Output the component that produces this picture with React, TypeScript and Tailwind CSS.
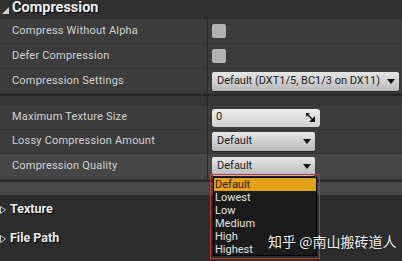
import React from "react";

const font = { fontFamily: "Roboto, 'Liberation Sans', sans-serif" };

function Combo({ text, w }: { text: string; w: string }) {
  return (
    <div
      className={`${w} h-[19px] rounded-[2px] bg-gradient-to-b from-[#e6e6e6] to-[#b9b9b9] flex items-center justify-between pl-[5px] pr-[4px] text-[11px] text-[#1c1c1c] shadow-[0_1px_0_#222]`}
    >
      <span>{text}</span>
      <svg width="8" height="5" viewBox="0 0 8 5">
        <polygon points="0,0 8,0 4,5" fill="#111" />
      </svg>
    </div>
  );
}

function Check() {
  return <div className="w-[14px] h-[14px] rounded-[2px] bg-[#b3b3b3]" />;
}

function Row({
  label,
  children,
  h,
  hl,
}: {
  label: string;
  children?: React.ReactNode;
  h: string;
  hl?: boolean;
}) {
  return (
    <div className={`flex ${h} ${hl ? "bg-[#464646]" : "bg-[#3c3c3c]"} border-b border-[#333]`}>
      <div className="w-[208px] flex items-center pl-[12px] text-[11px] text-[#d2d2d2] tracking-[0.2px] border-r border-[#282828]">
        {label}
      </div>
      <div className="flex-1 flex items-center pl-[4px]">{children}</div>
    </div>
  );
}

export default function App() {
  const items = ["Default", "Lowest", "Low", "Medium", "High", "Highest"];
  return (
    <div className="relative w-[402px] h-[261px] overflow-hidden bg-[#2d2d2d]" style={font}>
      {/* header */}
      <div className="h-[19px] bg-[#303030] flex items-center pl-[2px] border-b border-[#2a2a2a]">
        <svg width="7" height="7" viewBox="0 0 7 7" className="mr-[3px] mt-[2px]">
          <polygon points="7,0 7,7 0,7" fill="#cfcfcf" />
        </svg>
        <span className="text-[14.5px] leading-[16px] font-bold text-[#efefef] -mt-[2px] [text-shadow:1px_1px_0_#000]">
          Compression
        </span>
      </div>
      <Row label="Compress Without Alpha" h="h-[25px]">
        <Check />
      </Row>
      <Row label="Defer Compression" h="h-[25px]">
        <Check />
      </Row>
      <Row label="Compression Settings" h="h-[25px]">
        <Combo text="Default (DXT1/5, BC1/3 on DX11)" w="w-[187px]" />
      </Row>
      {/* separator */}
      <div className="flex h-[12px] bg-[#353535] border-t-2 border-[#272727]">
        <div className="w-[208px] border-r border-[#282828]" />
      </div>
      <Row label="Maximum Texture Size" h="h-[24px]">
        <div className="w-[108px] h-[18px] rounded-[3px] bg-gradient-to-b from-[#ececec] to-[#d0d0d0] flex items-center justify-between pl-[4px] pr-[5px] text-[11px] text-[#1c1c1c]">
          <span>0</span>
          <svg width="9" height="9" viewBox="0 0 9 9">
            <polygon points="0,0 4,0 0,4" fill="#111" />
            <polygon points="9,9 9,3 3,9" fill="#111" />
            <line x1="1" y1="1" x2="7" y2="7" stroke="#111" strokeWidth="1.4" />
          </svg>
        </div>
      </Row>
      <Row label="Lossy Compression Amount" h="h-[24px]">
        <Combo text="Default" w="w-[103px]" />
      </Row>
      <Row label="Compression Quality" h="h-[26px]" hl>
        <Combo text="Default" w="w-[103px]" />
      </Row>
      {/* strip */}
      <div className="h-[2px] bg-[#2a2a2a]" />
      <div className="h-[13px] bg-[#484848]" />
      {/* lower section */}
      <div className="bg-[#2d2d2d]">
        <div className="h-[29px] flex items-center">
          <svg width="6" height="8" viewBox="0 0 6 8" className="mr-[4px]">
            <polygon points="0.5,0.5 5.5,4 0.5,7.5" fill="none" stroke="#bdbdbd" strokeWidth="1" />
          </svg>
          <span className="text-[12.5px] font-bold text-[#ececec] [text-shadow:1px_1px_0_#000]">Texture</span>
        </div>
        <div className="h-[29px] flex items-center">
          <svg width="6" height="8" viewBox="0 0 6 8" className="mr-[4px]">
            <polygon points="0.5,0.5 5.5,4 0.5,7.5" fill="none" stroke="#bdbdbd" strokeWidth="1" />
          </svg>
          <span className="text-[12.5px] font-bold text-[#ececec] [text-shadow:1px_1px_0_#000]">File Path</span>
        </div>
      </div>

      {/* dropdown list with red annotation */}
      <div className="absolute left-[210px] top-[174px] w-[110px] h-[85px] border border-[#c0392b] p-[2px]">
        <div className="w-full h-full bg-[#1b1b1b] border border-black">
          {items.map((it, i) => (
            <div
              key={it}
              className={`h-[13px] leading-[13px] pl-[1px] text-[11px] ${
                i === 0 ? "bg-[#e3a21a] text-[#2a1c00]" : "text-[#e2e2e2]"
              }`}
            >
              {it}
            </div>
          ))}
        </div>
      </div>

      {/* watermark */}
      <div
        className="absolute left-[268px] top-[231px] text-[14px] text-[#f0f0f0] [text-shadow:0_0_2px_rgba(0,0,0,0.6)]"
        style={{ fontFamily: "'Noto Sans CJK SC', 'Noto Sans', sans-serif" }}
      >
        知乎 @南山搬砖道人
      </div>
    </div>
  );
}
